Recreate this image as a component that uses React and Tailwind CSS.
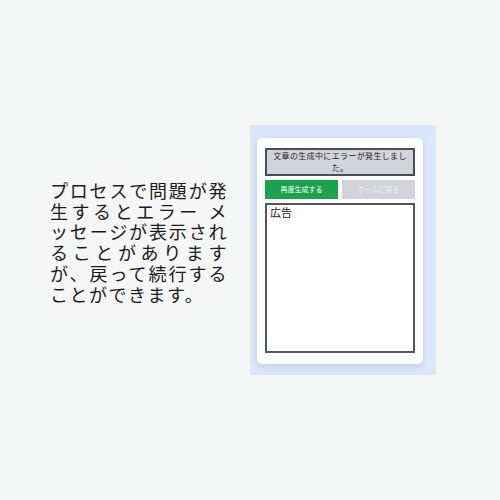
export default function App() {
  const jp = { fontFamily: '"Noto Sans CJK JP", "Noto Sans", sans-serif' };
  return (
    <div className="w-[500px] h-[500px] bg-[#f5f7f6] flex items-start" style={jp}>
      <p
        lang="ja"
        className="mt-[180px] ml-[50px] w-[178px] text-[18px] leading-[20.7px] tracking-[1.5px] text-justify text-[#1a1a1a]"
      >
        プロセスで問題が発生するとエラー メッセージが表示されることがありますが、戻って続行することができます。
      </p>
      <div className="mt-[125px] ml-[22px] w-[186px] h-[250px] bg-[#dbe7fc] pt-[13px] pl-[7px]">
        <div className="w-[166px] h-[226px] bg-white rounded-[5px] shadow-[0_2px_6px_rgba(0,0,0,0.12)] px-[8px] pt-[10px] flex flex-col">
          <div className="h-[28px] border-2 border-[#4b4f55] bg-[#d1d4da] text-center text-[8px] leading-[12px] tracking-[0.35px] text-[#222] px-[2px]">
            文章の生成中にエラーが発生しました。
          </div>
          <div className="mt-[4px] flex gap-[4px]">
            <div className="w-[73px] h-[19px] bg-[#1aa34a] text-white text-[7px] flex items-center justify-center">
              再度生成する
            </div>
            <div className="w-[73px] h-[19px] bg-[#d1d4da] text-[#eef0f3] text-[7px] flex items-center justify-center">
              ホームに戻る
            </div>
          </div>
          <div className="mt-[4px] h-[150px] border-2 border-[#555] px-[3px] text-[11px] leading-[14px] text-[#222]">
            広告
          </div>
        </div>
      </div>
    </div>
  );
}
